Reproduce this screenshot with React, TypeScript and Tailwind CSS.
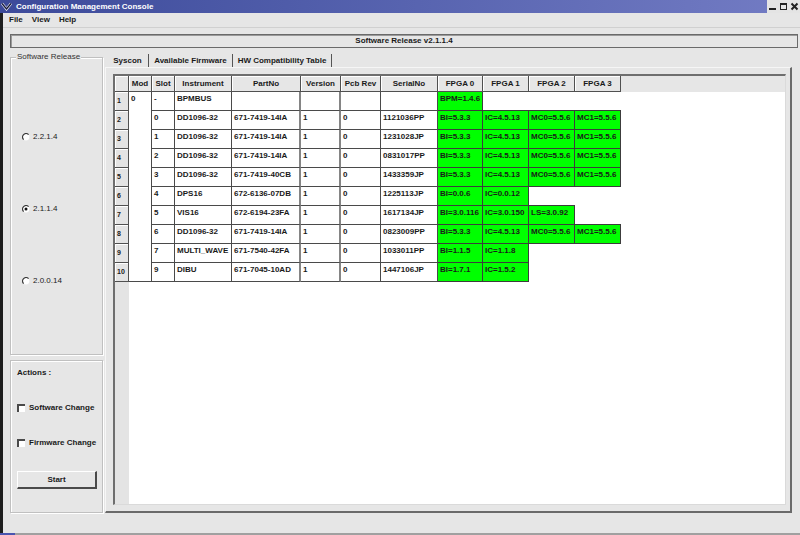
import React from 'react';

type Row = {
  n: number;
  slot: string;
  inst: string;
  part: string;
  ver: string;
  pcb: string;
  serial: string;
  fpga: string[];
};

const DD = ['BI=5.3.3', 'IC=4.5.13', 'MC0=5.5.6', 'MC1=5.5.6'];

const ROWS: Row[] = [
  { n: 1, slot: '-', inst: 'BPMBUS', part: '', ver: '', pcb: '', serial: '', fpga: ['BPM=1.4.6'] },
  { n: 2, slot: '0', inst: 'DD1096-32', part: '671-7419-14IA', ver: '1', pcb: '0', serial: '1121036PP', fpga: DD },
  { n: 3, slot: '1', inst: 'DD1096-32', part: '671-7419-14IA', ver: '1', pcb: '0', serial: '1231028JP', fpga: DD },
  { n: 4, slot: '2', inst: 'DD1096-32', part: '671-7419-14IA', ver: '1', pcb: '0', serial: '0831017PP', fpga: DD },
  { n: 5, slot: '3', inst: 'DD1096-32', part: '671-7419-40CB', ver: '1', pcb: '0', serial: '1433359JP', fpga: DD },
  { n: 6, slot: '4', inst: 'DPS16', part: '672-6136-07DB', ver: '1', pcb: '0', serial: '1225113JP', fpga: ['BI=0.0.6', 'IC=0.0.12'] },
  { n: 7, slot: '5', inst: 'VIS16', part: '672-6194-23FA', ver: '1', pcb: '0', serial: '1617134JP', fpga: ['BI=3.0.116', 'IC=3.0.150', 'LS=3.0.92'] },
  { n: 8, slot: '6', inst: 'DD1096-32', part: '671-7419-14IA', ver: '1', pcb: '0', serial: '0823009PP', fpga: DD },
  { n: 9, slot: '7', inst: 'MULTI_WAVE', part: '671-7540-42FA', ver: '1', pcb: '0', serial: '1033011PP', fpga: ['BI=1.1.5', 'IC=1.1.8'] },
  { n: 10, slot: '9', inst: 'DIBU', part: '671-7045-10AD', ver: '1', pcb: '0', serial: '1447106JP', fpga: ['BI=1.7.1', 'IC=1.5.2'] },
];

const HEAD = [
  { label: 'Mod', w: 'w-[23px]' },
  { label: 'Slot', w: 'w-[23px]' },
  { label: 'Instrument', w: 'w-[57px]' },
  { label: 'PartNo', w: 'w-[69px]' },
  { label: 'Version', w: 'w-[40px]' },
  { label: 'Pcb Rev', w: 'w-[40px]' },
  { label: 'SerialNo', w: 'w-[57px]' },
  { label: 'FPGA 0', w: 'w-[45px]' },
  { label: 'FPGA 1', w: 'w-[46px]' },
  { label: 'FPGA 2', w: 'w-[46px]' },
  { label: 'FPGA 3', w: 'w-[46px]' },
];

// slot, instrument, partno, version, pcb rev, serial
const INFO_CELL = [
  'w-[23px] border-r border-r-[#4a4a4a]',
  'w-[57px] border-r border-r-[#4a4a4a]',
  'w-[69px] border-r-2 border-r-[#858585]',
  'w-[40px] border-r-2 border-r-[#858585]',
  'w-[40px] border-r border-r-[#4a4a4a]',
  'w-[57px] border-r border-r-[#4a4a4a]',
];
const FPGA_W = ['w-[45px]', 'w-[46px]', 'w-[46px]', 'w-[46px]'];

function Radio({ checked }: { checked?: boolean }) {
  return (
    <svg width="8" height="8" viewBox="0 0 8 8" className="shrink-0">
      <circle cx="4" cy="4" r="3.4" fill="#fff" />
      <path d="M6.6 1.6 A3.4 3.4 0 0 0 1.6 6.6" stroke="#3a3a3a" strokeWidth="1.3" fill="none" />
      {checked && <circle cx="4" cy="4" r="1.5" fill="#111" />}
    </svg>
  );
}

function Check({ label }: { label: string }) {
  return (
    <div className="flex h-[10px] items-center">
      <span className="h-[8px] w-[8px] shrink-0 border-l-2 border-t-2 border-[#4a4a4a] bg-white" />
      <span className="ml-[4px] font-bold">{label}</span>
    </div>
  );
}

function TitleBar() {
  return (
    <div className="flex h-[13px] items-center bg-gradient-to-r from-[#3c4a9a] to-[#737cc4]">
      <div className="flex h-[13px] w-[13px] items-center justify-center">
        <svg width="11" height="9" viewBox="0 0 11 9">
          <path d="M1 1.5 L5.5 7 L10 1.5" stroke="#ffffff" strokeWidth="2.6" fill="none" />
          <path d="M1 1.5 L5.5 7 L10 1.5" stroke="#14183a" strokeWidth="1.4" fill="none" />
        </svg>
      </div>
      <span className="ml-[3px] font-bold text-white">Configuration Management Console</span>
      <div className="ml-auto flex h-[13px]">
        <div className="flex h-[13px] w-[11px] items-center justify-center bg-[#e4e4e4]">
          <svg width="9" height="9" viewBox="0 0 9 9">
            <rect x="1" y="6" width="7" height="2" fill="#222" />
          </svg>
        </div>
        <div className="flex h-[13px] w-[11px] items-center justify-center bg-[#e4e4e4]">
          <svg width="9" height="9" viewBox="0 0 9 9">
            <rect x="1.5" y="1.5" width="6" height="6" fill="none" stroke="#222" strokeWidth="1" />
            <rect x="1" y="1" width="7" height="2" fill="#222" />
          </svg>
        </div>
        <div className="flex h-[13px] w-[11px] items-center justify-center bg-[#e4e4e4]">
          <svg width="9" height="9" viewBox="0 0 9 9">
            <path d="M1.5 1.5 L7.5 7.5 M7.5 1.5 L1.5 7.5" stroke="#222" strokeWidth="2" />
          </svg>
        </div>
      </div>
    </div>
  );
}

function Table() {
  return (
    <div className="flex h-full flex-col border-l-2 border-t-2 border-[#6e6e6e] border-r border-b border-r-[#dadada] border-b-[#dadada]">
      <div className="flex h-[16px] shrink-0 bg-[#e6e6e6]">
        <div className="w-[14px] shrink-0 border-b border-r border-[#505050] shadow-[inset_1px_1px_0_#fff]" />
        {HEAD.map((h) => (
          <div
            key={h.label}
            className={`${h.w} flex shrink-0 items-center justify-center border-b border-r border-[#505050] font-bold shadow-[inset_1px_1px_0_#fff]`}
          >
            {h.label}
          </div>
        ))}
        <div className="flex-1" />
      </div>
      <div className="flex flex-1">
        <div className="w-[14px] shrink-0 bg-[#e4e4e4]">
          {ROWS.map((r) => (
            <div
              key={r.n}
              className="flex h-[19px] items-center border-b border-r border-[#505050] pl-[2px] text-[7px] font-bold shadow-[inset_1px_1px_0_#fff]"
            >
              {r.n}
            </div>
          ))}
        </div>
        <div className="flex flex-1 items-start bg-white">
          <div className="h-[190px] w-[23px] shrink-0 border-b border-r border-[#4a4a4a] pl-[2px] pt-[2px] font-bold">0</div>
          <div className="flex flex-col">
            {ROWS.map((r, i) => {
              const info = [r.slot, r.inst, r.part, r.ver, r.pcb, r.serial];
              const next = ROWS[i + 1];
              return (
                <div key={r.n} className="flex h-[19px]">
                  {info.map((t, j) => (
                    <div
                      key={j}
                      className={`${INFO_CELL[j]} shrink-0 border-b border-b-[#4a4a4a] pl-[2px] pt-[2px] font-bold`}
                    >
                      {t}
                    </div>
                  ))}
                  {FPGA_W.map((w, k) => {
                    const v = r.fpga[k];
                    if (v) {
                      return (
                        <div
                          key={k}
                          className={`${w} shrink-0 border-b border-r border-[#3c3c3c] bg-[#00ff00] pl-[2px] pt-[2px] font-bold`}
                        >
                          {v}
                        </div>
                      );
                    }
                    const below = next && next.fpga[k];
                    return (
                      <div
                        key={k}
                        className={`${w} shrink-0 ${below ? 'border-b border-[#3c3c3c]' : ''}`}
                      />
                    );
                  })}
                </div>
              );
            })}
          </div>
        </div>
      </div>
    </div>
  );
}

export default function App() {
  return (
    <div className="flex h-[535px] w-[800px] flex-col overflow-hidden bg-[#e6e6e6] font-['Liberation_Sans',Arial,sans-serif] text-[8px] leading-[10px] text-[#1a1a1a]">
      <TitleBar />
      <div className="flex flex-1">
        <div className="w-[3px] shrink-0 bg-[#1e1e1e]" />
        <div className="flex flex-1 flex-col">
          <div className="flex h-[15px] shrink-0 items-center gap-[9px] border-b border-[#d0d0d0] pl-[6px] font-bold">
            <span>File</span>
            <span>View</span>
            <span>Help</span>
          </div>
          <div className="ml-[7px] mr-[2px] mt-[6px] flex h-[14px] shrink-0 items-center justify-center border border-[#6a6a6a] font-bold shadow-[inset_1px_1px_0_#9a9a9a]">
            Software Release v2.1.1.4
          </div>
          <div className="mt-[4px] flex h-[461px] shrink-0">
            <div className="ml-[7px] flex w-[93px] shrink-0 flex-col">
              <div className="mt-[5px] flex h-[298px] flex-col border border-[#c0c0c0] shadow-[inset_1px_1px_0_#fff,1px_1px_0_#fff]">
                <div className="-mt-[6px] ml-[5px] w-fit bg-[#e6e6e6] px-[1px] text-[#333]">Software Release</div>
                <div className="mt-[69px] flex flex-col gap-[60px] pl-[11px]">
                  <div className="flex h-[12px] items-center gap-[3px]">
                    <Radio />
                    <span>2.2.1.4</span>
                  </div>
                  <div className="flex h-[12px] items-center gap-[3px]">
                    <Radio checked />
                    <span>2.1.1.4</span>
                  </div>
                  <div className="flex h-[12px] items-center gap-[3px]">
                    <Radio />
                    <span>2.0.0.14</span>
                  </div>
                </div>
              </div>
              <div className="mt-[5px] flex h-[153px] flex-col border border-[#c0c0c0] pl-[6px] pt-[7px] shadow-[inset_1px_1px_0_#fff,1px_1px_0_#fff]">
                <div className="font-bold">Actions :</div>
                <div className="mt-[25px]">
                  <Check label="Software Change" />
                </div>
                <div className="mt-[25px]">
                  <Check label="Firmware Change" />
                </div>
                <button className="mt-[23px] flex h-[18px] w-[80px] items-center justify-center border-l border-t border-white border-b-2 border-r-2 border-b-[#4a4a4a] border-r-[#4a4a4a] bg-[#e6e6e6] font-bold">
                  Start
                </button>
              </div>
            </div>
            <div className="ml-[2px] flex w-[687px] shrink-0 flex-col">
              <div className="flex h-[15px] shrink-0 items-end">
                <div className="ml-[2px] flex h-[13px] w-[42px] items-center justify-center border-r border-[#555] font-bold">Syscon</div>
                <div className="flex h-[13px] w-[84px] items-center justify-center border-r border-[#555] font-bold">Available Firmware</div>
                <div className="flex h-[13px] w-[99px] items-center justify-center border-r border-[#555] font-bold">HW Compatibility Table</div>
              </div>
              <div className="flex-1 border-l border-t border-[#f6f6f6] border-b-2 border-r-2 border-b-[#6a6a6a] border-r-[#6a6a6a] pb-[6px] pl-[7px] pr-[4px] pt-[6px]">
                <Table />
              </div>
            </div>
          </div>
        </div>
      </div>
      <div className="flex h-[2px] shrink-0 bg-[#a0a0a0]">
        <div className="w-[15px] bg-[#4a55b0]" />
      </div>
    </div>
  );
}
